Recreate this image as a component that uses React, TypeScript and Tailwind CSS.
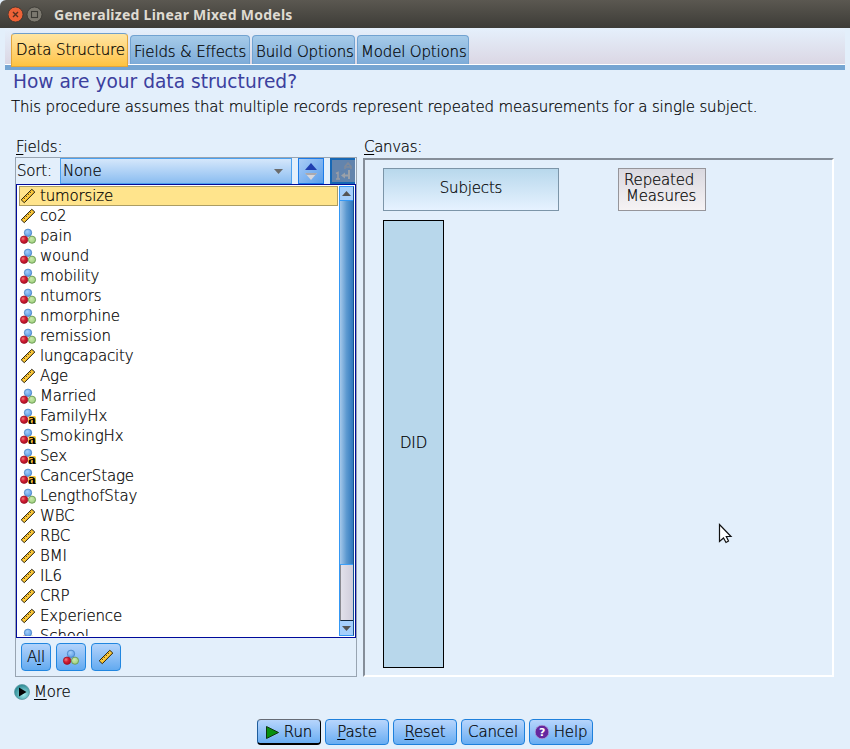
import React from "react";

type Kind = "scale" | "nominal" | "string";

function Ruler() {
  return (
    <svg width="16" height="16" viewBox="0 0 16 16" className="block shrink-0">
      <path d="M1.2 11.800L11.800 1.300L14.800 4L4.300 14.700Z" fill="#f9c22c" stroke="#2b2513" strokeWidth="1" />
      <path d="M3.500 12.500L12.800 3.500" stroke="#fdd55c" strokeWidth="1" />
      <path d="M3.500 9.500l1.400 1.400M5.500 7.500l1.400 1.400M7.500 5.500l1.400 1.400M9.500 3.500l1.400 1.400" stroke="#2b2513" strokeWidth=".8" />
    </svg>
  );
}

function Balls({ letter = false }: { letter?: boolean }) {
  return (
    <svg width="16" height="16" viewBox="0 0 16 16" className="block shrink-0 overflow-visible">
      <defs>
        <radialGradient id="ballBlue" cx=".4" cy=".35" r=".65"><stop offset="0" stopColor="#a5cffa" /><stop offset="1" stopColor="#5f9fe6" /></radialGradient>
        <radialGradient id="ballRed" cx=".35" cy=".35" r=".65"><stop offset="0" stopColor="#f08080" /><stop offset=".5" stopColor="#d42035" /><stop offset="1" stopColor="#b01025" /></radialGradient>
        <radialGradient id="ballGreen" cx=".4" cy=".35" r=".65"><stop offset="0" stopColor="#cde9ae" /><stop offset="1" stopColor="#9cd07c" /></radialGradient>
      </defs>
      <circle cx="8" cy="4.800" r="3.700" fill="url(#ballBlue)" stroke="#4682c4" strokeWidth=".8" />
      <circle cx="4.100" cy="11.700" r="3.700" fill="url(#ballRed)" stroke="#a01226" strokeWidth=".8" />
      {letter ? (
        <>
          <rect x="8.500" y="8" width="7.500" height="8" rx="1.500" fill="#fbc53c" />
          <text x="8" y="15.500" fontSize="13" fontWeight="700" fontFamily="DejaVu Serif, serif" textLength="8" lengthAdjust="spacingAndGlyphs" fill="#000">a</text>
        </>
      ) : (
        <circle cx="12" cy="11.700" r="3.600" fill="url(#ballGreen)" stroke="#62914b" strokeWidth=".8" />
      )}
    </svg>
  );
}

const fields: { name: string; kind: Kind }[] = [
  { name: "tumorsize", kind: "scale" },
  { name: "co2", kind: "scale" },
  { name: "pain", kind: "nominal" },
  { name: "wound", kind: "nominal" },
  { name: "mobility", kind: "nominal" },
  { name: "ntumors", kind: "nominal" },
  { name: "nmorphine", kind: "nominal" },
  { name: "remission", kind: "nominal" },
  { name: "lungcapacity", kind: "scale" },
  { name: "Age", kind: "scale" },
  { name: "Married", kind: "nominal" },
  { name: "FamilyHx", kind: "string" },
  { name: "SmokingHx", kind: "string" },
  { name: "Sex", kind: "string" },
  { name: "CancerStage", kind: "string" },
  { name: "LengthofStay", kind: "nominal" },
  { name: "WBC", kind: "scale" },
  { name: "RBC", kind: "scale" },
  { name: "BMI", kind: "scale" },
  { name: "IL6", kind: "scale" },
  { name: "CRP", kind: "scale" },
  { name: "Experience", kind: "scale" },
  { name: "School", kind: "nominal" },
];

function TitleBar() {
  return (
    <header className="flex h-7 items-center rounded-tl-md bg-linear-to-b from-[#5b5851] to-[#3d3c37] pl-2">
      <svg width="36" height="18" viewBox="0 0 36 18" className="block">
        <circle cx="7.500" cy="9.500" r="7.500" fill="#ee6237" stroke="#35312c" strokeWidth=".8" />
        <path d="M5 7l5 5M10 7l-5 5" stroke="#57301f" strokeWidth="1.400" />
        <circle cx="26.500" cy="9.500" r="7.500" fill="#7c7970" stroke="#35332e" strokeWidth=".8" />
        <rect x="23.500" y="6.500" width="6" height="6" fill="none" stroke="#3b3a35" strokeWidth="1.100" />
      </svg>
      <h1 className="ml-[10px] pt-[2px] font-['Noto_Sans',sans-serif] text-[14px] leading-[26px] font-bold tracking-[0.26px] whitespace-nowrap text-[#dfdbd2] [-webkit-text-stroke:0px]">Generalized Linear Mixed Models</h1>
    </header>
  );
}

const tab = "h-[29px] rounded-t-[4px] border border-b-0 border-[#72a3d1] bg-linear-to-b from-[#a6cbe9] to-[#7dabd8] pl-[3px] leading-[33px] whitespace-nowrap";

function Tabs() {
  return (
    <div className="mx-[5px] h-[42px] bg-[#76a5d2]">
      <nav className="flex h-[37px] items-end gap-[2px] border-b border-white bg-linear-to-b from-[#e5f0fc] to-[#dbd7e4] pl-[6px]">
        <div className="relative -mb-[3px] h-[34px] w-[117px] rounded-t-[4px] border border-[#e3a63b] border-t-[#6f9ecb] bg-linear-to-b from-[#ffe5a1] to-[#fec33f] pl-[4px] leading-[33px] tracking-[-0.1px] whitespace-nowrap">Data Structure</div>
        <div className={`w-[120px] ${tab}`}>Fields &amp; Effects</div>
        <div className={`w-[103px] ${tab}`}>Build Options</div>
        <div className={`w-[112px] ${tab}`}>Model Options</div>
      </nav>
    </div>
  );
}

const tool = "flex h-7 w-[30px] items-center justify-center rounded-[4px] border border-[#2186e0] bg-linear-to-b from-[#b3d3fb] to-[#62aaf0]";

function FieldsPanel() {
  return (
    <section className="w-[342px]">
      <div className="h-[20px] pl-px leading-[20px]"><u className="underline-offset-2">F</u>ields:</div>
      <div className="h-[520px] border border-[#98a4b1]">
        <div className="flex h-[26px]">
          <span className="w-[44px] pl-px leading-[26px]">Sort:</span>
          <div className="flex h-[26px] w-[232px] items-center justify-between border border-[#4ba0ee] bg-linear-to-b from-[#d5e7fb] to-[#8bbdf0] pr-[8px] pl-[2px]">
            <span>None</span>
            <svg width="9" height="5" viewBox="0 0 9 5"><path d="M0 0h9L4.500 5z" fill="#6b6b6b" /></svg>
          </div>
          <div className="ml-[6px] flex w-[26px] items-center justify-center border border-[#1c7be8] bg-linear-to-br from-[#a9ccf6] to-[#5a9eea]">
            <svg width="12" height="17" viewBox="0 0 12 17"><path d="M6 0l6 7H0z" fill="#203fb0" /><path d="M0 10h12l-6 7z" fill="#d6d6dc" /><path d="M0 10h12l-1.500 2h-9z" fill="#aaa9af" /></svg>
          </div>
          <div className="ml-[6px] flex w-[25px] items-center justify-center border-2 border-r-0 border-[#1668b5] bg-[#6284ad]">
            <svg width="18" height="20" viewBox="0 0 18 20"><path d="M10 8V5.500L13 2l3 3.500V8M10.500 6h5" fill="none" stroke="#7f8a9b" strokeWidth="1.600" /><path d="M1 12.500l2-1V18M1 18h4" fill="none" stroke="#989ca4" strokeWidth="1.600" /><path d="M6 14.500l4-3v2h3V9h2v9h-2v-2.500h-3v2z" fill="#9aa0a8" /></svg>
          </div>
        </div>
        <div className="flex h-[454px] border border-[#000a9a] bg-white pt-px pl-[2px]">
          <ul className="h-[450px] w-[320px] overflow-hidden">
            {fields.map((f, i) => (
              <li key={f.name} className={`flex h-5 w-[319px] items-center border ${i === 0 ? "border-[#ac9d63] bg-[#ffe48c]" : "border-transparent"}`}>
                {f.kind === "scale" ? <Ruler /> : <Balls letter={f.kind === "string"} />}
                <span className="ml-1 leading-5">{f.name}</span>
              </li>
            ))}
          </ul>
          <div className="flex h-[450px] w-[15px] flex-col border border-[#3498f5] border-r-[#124f91]">
            <div className="flex h-[14px] items-center justify-center border-b border-[#3498f5] bg-[#a5cffc]"><svg width="9" height="5" viewBox="0 0 9 5"><path d="M0 5h9L4.500 0z" fill="#555" /></svg></div>
            <div className="h-[364px] border-b border-[#3aa0fa] bg-linear-to-r from-[#a5c8ea] via-[#5c99d0] to-[#2f78bd]" />
            <div className="h-[56px] border-b border-l border-b-[#12283f] border-l-[#8a8a90] bg-linear-to-r from-[#e2e1ea] to-[#cfcddb]" />
            <div className="flex flex-1 items-center justify-center bg-[#a5cffc]"><svg width="9" height="5" viewBox="0 0 9 5"><path d="M0 0h9L4.500 5z" fill="#555" /></svg></div>
          </div>
        </div>
        <div className="flex gap-[5px] pt-[5px] pl-[5px]">
          <div className={tool}><span>A<u className="underline-offset-2">l</u>l</span></div>
          <div className={tool}><Balls /></div>
          <div className={tool}><Ruler /></div>
        </div>
      </div>
    </section>
  );
}

function Canvas() {
  return (
    <section className="ml-[6px] w-[471px]">
      <div className="h-[21px] pl-px leading-[20px] tracking-[-0.3px]"><u className="underline-offset-2">C</u>anvas:</div>
      <div className="relative h-[519px] border-2 border-t-[#858e99] border-r-white border-b-white border-l-[#858e99]">
        <div className="absolute top-[8px] left-[18px] flex h-[43px] w-[176px] items-center justify-center border border-[#7c95a8] bg-linear-to-b from-[#b8d8ec] to-[#e6f2ff] pb-[2px]">Subjects</div>
        <div className="absolute top-[8px] left-[253px] h-[43px] w-[88px] border border-[#96959a] bg-linear-to-b from-[#dad9e0] to-[#f6f3f4] pt-[3px] pl-[5px] leading-4">Repeated<br /><span className="ml-[2px]">Measures</span></div>
        <div className="absolute top-[60px] left-[18px] flex h-[448px] w-[61px] items-center justify-center border border-black bg-[#b8d7eb] pb-[2px]">DID</div>
        <svg className="absolute top-[363px] left-[353px] overflow-visible" width="14" height="21" viewBox="0 0 14 21">
          <path d="M1.500 1.500v17l4-3.500 2.500 4.500 2.500-1.500-2.200-4.500h4.700z" fill="#fff" stroke="#111" strokeWidth="1.200" />
        </svg>
      </div>
    </section>
  );
}

const cmd = "flex h-[26px] w-16 items-center justify-center rounded-[4px] border border-[#1e80dc] bg-linear-to-b from-[#b7d5fc] to-[#68adf2] leading-[22px] whitespace-nowrap";

export default function App() {
  return (
    <div className="h-[749px] w-[850px] overflow-hidden bg-[#e3effb] font-['DejaVu_Sans',sans-serif] text-[15px] font-extralight tracking-[-0.165px] text-black [-webkit-text-stroke:0.22px]">
      <TitleBar />
      <Tabs />
      <h2 className="h-[24px] pl-[13px] text-[18.600px] leading-[24px] font-normal tracking-normal text-[#3c409e] [-webkit-text-stroke:0px]">How are your data structured?</h2>
      <p className="h-[43px] pl-[11px] leading-[26px] whitespace-nowrap">This procedure assumes that multiple records represent repeated measurements for a single subject.</p>
      <main className="flex pl-[15px]">
        <FieldsPanel />
        <Canvas />
      </main>
      <div className="mt-[4px] ml-[14px] flex h-[22px] items-center">
        <svg width="16" height="16" viewBox="0 0 16 16"><defs><radialGradient id="teal" cx=".6" cy=".65" r=".6"><stop offset="0" stopColor="#a6eef0" /><stop offset="1" stopColor="#318e98" /></radialGradient></defs><circle cx="8" cy="8" r="7.500" fill="url(#teal)" stroke="#5c9aa2" strokeWidth=".8" /><path d="M5 3.500l7.500 4.500L5 12.500z" fill="#050505" /></svg>
        <span className="ml-1 leading-[22px]"><u className="underline-offset-2">M</u>ore</span>
      </div>
      <footer className="mt-4 ml-[257px] flex gap-1">
        <div className="flex h-[26px] w-16 items-center justify-center rounded-[4px] border border-b-2 border-black border-t-[#666b75] border-l-[#1e5c9c] bg-linear-to-b from-[#b7d5fc] to-[#68adf2] pt-px leading-[22px]">
          <svg width="13" height="13" viewBox="0 0 13 13" className="mr-[5px]"><path d="M.5.5v12l12-6z" fill="#079010" stroke="#103510" /></svg>Run
        </div>
        <div className={cmd}><span><u className="underline-offset-2">P</u>aste</span></div>
        <div className={cmd}><span><u className="underline-offset-2">R</u>eset</span></div>
        <div className={cmd}>Cancel</div>
        <div className={cmd}>
          <svg width="14" height="14" viewBox="0 0 14 14" className="mr-[5px]"><circle cx="7" cy="7" r="6.800" fill="#65279f" stroke="#b69ed0" strokeWidth=".7" /><text x="7" y="11" textAnchor="middle" fontSize="11" fontWeight="700" fontFamily="DejaVu Sans" fill="#fff">?</text></svg>Help
        </div>
      </footer>
    </div>
  );
}
